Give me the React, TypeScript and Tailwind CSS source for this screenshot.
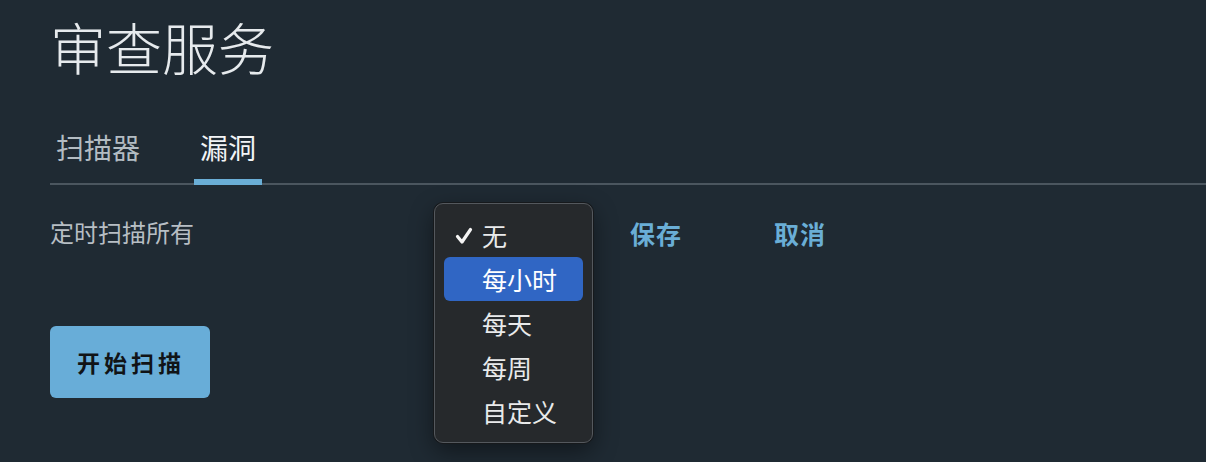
import React, { useState } from 'react';

const cjk = '[font-family:"Noto_Sans_CJK_SC","Noto_Sans",sans-serif]';

const options = ['无', '每小时', '每天', '每周', '自定义'];

const App: React.FC = () => {
  const [activeTab, setActiveTab] = useState('漏洞');
  const [selected] = useState('无');
  const hovered = '每小时';

  return (
    <div className={`min-h-[462px] w-full bg-[#1f2a33] pl-[50px] overflow-hidden ${cjk}`}>
      {/* Title */}
      <h1 className="pt-[18px] text-[56px] leading-none font-light text-[#e6eaed]">审查服务</h1>

      {/* Tabs */}
      <div className="mt-[60px] flex border-b-2 border-[#4b565f]">
        {['扫描器', '漏洞'].map(tab => (
          <button
            key={tab}
            onClick={() => setActiveTab(tab)}
            className={`-mb-[2px] px-[6px] pb-[18px] text-[28px] leading-[27px] border-b-[6px] ${
              activeTab === tab
                ? 'border-[#6aaed6] text-[#f2f4f6]'
                : 'border-transparent text-[#b3bcc3]'
            } ${tab === '扫描器' ? 'mr-[48px]' : ''}`}
          >
            {tab}
          </button>
        ))}
      </div>

      {/* Schedule row */}
      <div className="mt-[33px] flex h-[28px] items-center">
        <div className="w-[384px] text-[24px] leading-none text-[#b7bec4]">定时扫描所有</div>

        <div className="relative w-[196px] h-full">
          {/* open select menu */}
          <div className="absolute left-0 -top-[15px] w-[159px] rounded-[9px] border border-[#54585d] bg-[#26292c] pt-[9px] pb-[9px] shadow-[0_0_0_1px_#16191c,0_8px_24px_rgba(0,0,0,0.45)] z-10">
            {options.map(opt => (
              <div
                key={opt}
                className={`relative mx-[9px] flex h-[44px] items-center rounded-[6px] pl-[38px] text-[25px] leading-none text-[#e9eaeb] ${
                  opt === hovered ? 'bg-[#3066c4] text-white' : ''
                }`}
              >
                {opt === selected && (
                  <svg viewBox="0 0 18 18" className="absolute left-[11px] top-[14px] h-[18px] w-[18px]">
                    <path d="M2.5 9.5 L7 15 L15.5 2.5" fill="none" stroke="#f4f4f4" strokeWidth={3.2} strokeLinecap="round" strokeLinejoin="round" />
                  </svg>
                )}
                {opt}
              </div>
            ))}
          </div>
        </div>

        <button className="w-[144px] pt-[3px] text-left text-[25px] leading-none font-bold tracking-[1px] text-[#6aaed6]">保存</button>
        <button className="pt-[3px] text-[25px] leading-none font-bold tracking-[1px] text-[#6aaed6]">取消</button>
      </div>

      {/* Start scan */}
      <button className="mt-[80px] flex h-[72px] w-[160px] items-center justify-center rounded-[6px] bg-[#68add8] pl-[2px] text-[23px] font-bold tracking-[4px] text-[#111417]">
        开始扫描
      </button>
    </div>
  );
};

export default App;
